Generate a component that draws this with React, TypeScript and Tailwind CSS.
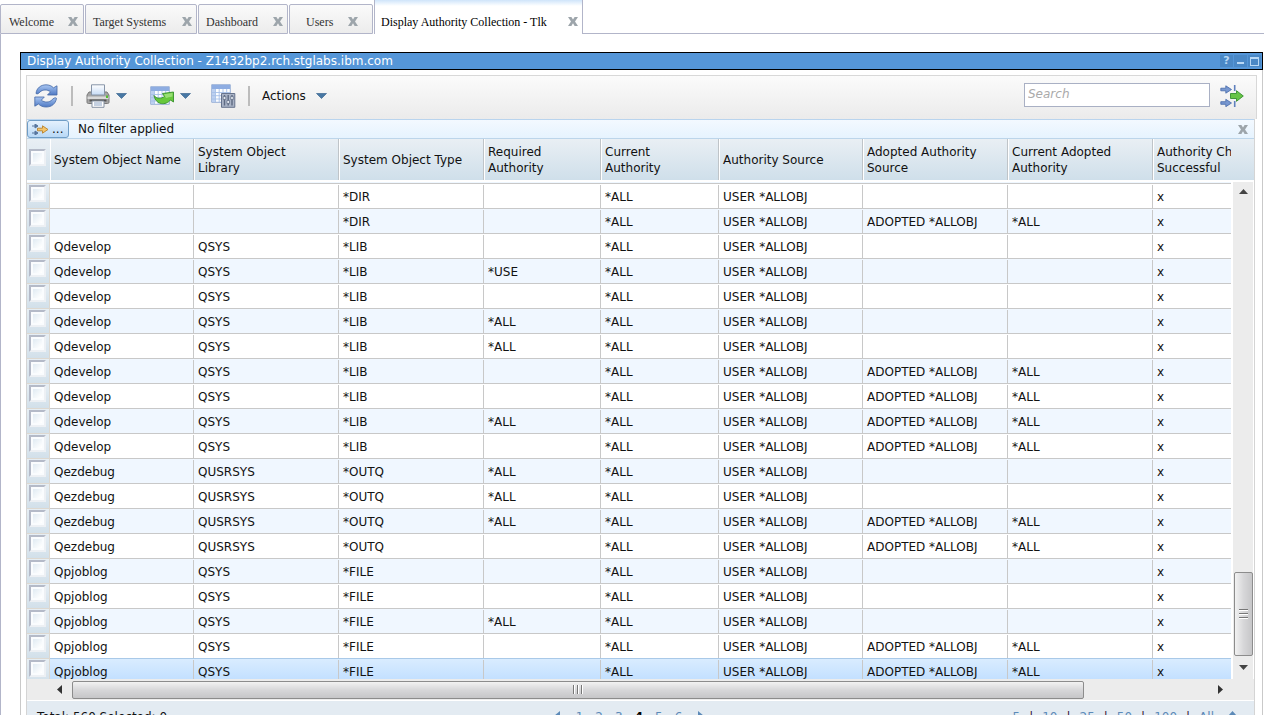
import { useState } from 'react';

const tabs = [
  { name: 'Welcome', className: 'w-[84px] pl-2 pr-[5px]' },
  { name: 'Target Systems', className: 'w-[112px] pl-[7px] pr-1' },
  { name: 'Dashboard', className: 'w-[90px] pl-[7px] pr-1' },
  { name: 'Users', className: 'w-[84px] pl-4 pr-[14px]' },
];

const columns = [
  { label: 'System Object Name', width: 'w-[144px]' },
  { label: 'System Object Library', width: 'w-[145px]' },
  { label: 'System Object Type', width: 'w-[145px]' },
  { label: 'Required Authority', width: 'w-[117px]' },
  { label: 'Current Authority', width: 'w-[118px]' },
  { label: 'Authority Source', width: 'w-[144px]' },
  { label: 'Adopted Authority Source', width: 'w-[145px]' },
  { label: 'Current Adopted Authority', width: 'w-[145px]' },
  { label: 'Authority Check Successful', width: 'w-[145px]' },
];

// name, library, type, required authority, adopted
const entries: [string, string, string, string, boolean][] = [
  ['', '', '*DIR', '', false],
  ['', '', '*DIR', '', true],
  ['Qdevelop', 'QSYS', '*LIB', '', false],
  ['Qdevelop', 'QSYS', '*LIB', '*USE', false],
  ['Qdevelop', 'QSYS', '*LIB', '', false],
  ['Qdevelop', 'QSYS', '*LIB', '*ALL', false],
  ['Qdevelop', 'QSYS', '*LIB', '*ALL', false],
  ['Qdevelop', 'QSYS', '*LIB', '', true],
  ['Qdevelop', 'QSYS', '*LIB', '', true],
  ['Qdevelop', 'QSYS', '*LIB', '*ALL', true],
  ['Qdevelop', 'QSYS', '*LIB', '', true],
  ['Qezdebug', 'QUSRSYS', '*OUTQ', '*ALL', false],
  ['Qezdebug', 'QUSRSYS', '*OUTQ', '*ALL', false],
  ['Qezdebug', 'QUSRSYS', '*OUTQ', '*ALL', true],
  ['Qezdebug', 'QUSRSYS', '*OUTQ', '', true],
  ['Qpjoblog', 'QSYS', '*FILE', '', false],
  ['Qpjoblog', 'QSYS', '*FILE', '', false],
  ['Qpjoblog', 'QSYS', '*FILE', '*ALL', false],
  ['Qpjoblog', 'QSYS', '*FILE', '', true],
  ['Qpjoblog', 'QSYS', '*FILE', '', true],
];

const rows = entries.map(([name, library, type, required, adopted]) => [
  name,
  library,
  type,
  required,
  '*ALL',
  'USER *ALLOBJ',
  adopted ? 'ADOPTED *ALLOBJ' : '',
  adopted ? '*ALL' : '',
  'x',
]);

const pageSizes = ['5', '10', '25', '50', '100', 'All'];

function CloseIcon() {
  return (
    <svg width="10" height="9" viewBox="0 0 10 9" aria-hidden="true">
      <path d="M0 0h3.4L5 2.6 6.6 0H10L7 4.4 10 9H6.6L5 6.3 3.4 9H0l3-4.6z" fill="#9da5ab" />
    </svg>
  );
}

function Caret() {
  return (
    <svg width="11" height="6" viewBox="0 0 11 6" aria-hidden="true">
      <path d="M.5.5h10l-5 5z" fill="#4878a4" stroke="#3c6790" strokeWidth=".7" />
    </svg>
  );
}

function RefreshIcon() {
  return (
    <svg width="24" height="24" viewBox="0 0 24 24" aria-hidden="true">
      <defs>
        <linearGradient id="refresh" x1="0" y1="0" x2="0" y2="1">
          <stop offset="0" stopColor="#a9c6f2" />
          <stop offset="1" stopColor="#4f7ac4" />
        </linearGradient>
      </defs>
      <path d="M2 9.500C2.500 4 7 .8 12 .8c3 0 5.500 1 7.500 3L23 1.800V11h-9.500l3-3.200C13 5.200 8.500 5.500 6 8c-1.500 1.500-2.500 2.500-4 1.500z" fill="url(#refresh)" stroke="#4468a6" strokeWidth=".8" />
      <path d="M22.500 14.300C21.500 20 17.500 23 12.200 23c-3.200 0-5.700-1-7.700-3L.8 22.200V13h9.500l-3 3.200c3.500 2.600 8 2.300 10.500-.2 1.500-1.500 3.200-3 4.700-1.700z" fill="url(#refresh)" stroke="#4468a6" strokeWidth=".8" />
    </svg>
  );
}

function PrinterIcon() {
  return (
    <svg width="24" height="24" viewBox="0 0 24 24" aria-hidden="true">
      <defs>
        <linearGradient id="paper" x1="0" y1="0" x2="0" y2="1">
          <stop offset="0" stopColor="#ffffff" />
          <stop offset="1" stopColor="#c6dbf5" />
        </linearGradient>
      </defs>
      <path d="M3 8h18l2 3v7c0 1-.5 1.500-1.500 1.500h-19C1.500 19.500 1 19 1 18v-7z" fill="#a4a4a4" stroke="#7a7a7a" />
      <path d="M5.500.8h13V11h-13z" fill="url(#paper)" stroke="#8795a8" />
      <path d="M1.500 12.500h21v2.500h-21z" fill="#d9d9d9" />
      <path d="M3.500 15.500h17v2h-17z" fill="#555" />
      <path d="M6 17h12v6.300H6z" fill="#fff" stroke="#8592a3" />
      <path d="M8 19h8M8 21h8" stroke="#8ba3c4" />
      <path d="M20 11.500h2v2.500h-2z" fill="#52c02f" />
    </svg>
  );
}

function GridLines() {
  return (
    <>
      <path d="M.7.700h18.600v17.600H.7z" fill="#fbfdff" stroke="#8ca6d2" strokeWidth=".9" />
      <path d="M1 1h18v4H1z" fill="#8eadE2" />
      <path d="M1 5h3v13H1z" fill="#bcd0f0" />
      <path d="M4.500 5V18M8.200 5V18M12 5V18M15.700 5V18M1 8.500h18M1 11.700h18M1 15h18" stroke="#a5bfe8" strokeWidth=".9" />
    </>
  );
}

function ExportIcon() {
  return (
    <svg width="24" height="20" viewBox="0 0 24 20" aria-hidden="true">
      <GridLines />
      <path d="M4 9.500c2.500 3.500 7 3.500 10.500 1L12.500 7.500l11-1.500v10l-3-2C16 19.500 6 19.500 4 9.500z" fill="#67c83c" stroke="#36912b" strokeWidth=".9" />
      <path d="M14 8.200l8.500-1.200v3.500c-3 .5-5 1-6.500 1.500z" fill="#98de74" />
    </svg>
  );
}

function ConfigureColumnsIcon() {
  return (
    <svg width="25" height="24" viewBox="0 0 25 24" aria-hidden="true">
      <GridLines />
      <path d="M10.500 9.500h13.300v13.800H10.500z" fill="#a9b3c6" stroke="#66738c" />
      <path d="M13.500 11v10.500M17.200 11v10.500M21 11v10.500" stroke="#5d6a82" strokeWidth="1.400" />
      <path d="M12.200 12.500h2.600v3h-2.600zM15.900 16.500h2.600v3h-2.600zM19.700 12.500h2.600v3h-2.600z" fill="#e2e7ef" stroke="#5d6a82" strokeWidth=".7" />
    </svg>
  );
}

function FilterIcon() {
  return (
    <svg width="24" height="22" viewBox="0 0 24 22" aria-hidden="true">
      <path d="M.8 3.200h5V.8L11.500 4.500 5.800 8.200V5.800h-5zM.8 16.700h5v-2.400l5.700 3.700-5.700 3.700v-2.400h-5z" fill="#7898d1" stroke="#4468a8" strokeWidth=".8" />
      <path d="M14.700 0v6M14.700 16v6" stroke="#5f80bd" strokeWidth="1.600" />
      <path d="M10.500 8.500h6V5.700l6.800 5.300-6.800 5.300v-2.800h-6z" fill="#67c546" stroke="#35902f" strokeWidth=".9" />
    </svg>
  );
}

function FilterBadge() {
  return (
    <svg width="17" height="11" viewBox="0 0 17 11" aria-hidden="true">
      <path d="M0 2h4M0 9h4M3 0l3 2-3 2zM3 7l3 2-3 2z" fill="#56749c" stroke="#56749c" strokeWidth="1" />
      <path d="M5.500 4.200h5V1.800l5.500 3.700-5.500 3.700V6.800h-5z" fill="#f4c56a" stroke="#b9822c" strokeWidth=".9" />
    </svg>
  );
}

function Separator() {
  return <span className="h-5 w-[2px] bg-[#bcbcbc]" />;
}

function Checkbox({ label }: { label: string }) {
  return (
    <input
      type="checkbox"
      aria-label={label}
      className="block size-[17px] appearance-none border-2 border-[#edf0f4] border-t-[#b4bac8] border-l-[#b4bac8] bg-linear-to-br from-[#d9e6f0] to-white to-80% shadow-[inset_0_0_0_2px_#fafcfe] checked:bg-[#5596d8]"
    />
  );
}

function TabStrip() {
  return (
    <nav className="flex h-[34px] shrink-0 items-end font-['Liberation_Serif',serif] text-[12px] text-[#333]">
      {tabs.map((tab) => (
        <div
          key={tab.name}
          className={`mr-px flex h-[30px] items-center justify-between rounded-t-[2px] border border-[#b2b5c9] bg-linear-to-b from-[#fafafa] to-[#ececec] pt-[5px] whitespace-nowrap ${tab.className}`}
        >
          <a href="#">{tab.name}</a>
          <button type="button" aria-label={`Close ${tab.name}`}>
            <CloseIcon />
          </button>
        </div>
      ))}
      <div className="flex h-[34px] w-[209px] items-center justify-between border-x border-[#b2b5c9] bg-linear-to-b from-[#cfe4fa] to-white to-[6px] pt-[9px] pr-1 pl-[6px] whitespace-nowrap text-black">
        <a href="#" aria-current="page">Display Authority Collection - Tlk</a>
        <button type="button" aria-label="Close Display Authority Collection">
          <CloseIcon />
        </button>
      </div>
      <div className="h-full flex-1 border-b border-[#b2b5c9]" />
    </nav>
  );
}

function TitleBar() {
  return (
    <header className="flex h-[18px] items-center border border-black bg-[#5596d8] pr-px pl-[6px] leading-4 text-white">
      <h1 className="flex-1">Display Authority Collection - Z1432bp2.rch.stglabs.ibm.com</h1>
      <div className="flex gap-px">
        <button type="button" aria-label="Help" className="flex h-3 w-[13px] items-center justify-center bg-[#4a88c6] text-[11px] leading-3 font-bold text-[#b9d8f5]">?</button>
        <button type="button" aria-label="Minimize" className="flex h-3 w-[13px] items-end justify-center bg-[#4a88c6] pb-[3px]">
          <span className="h-[2px] w-[7px] bg-[#b9d8f5]" />
        </button>
        <button type="button" aria-label="Maximize" className="flex h-3 w-[13px] items-center justify-center bg-[#4a88c6]">
          <span className="h-[9px] w-[9px] border border-t-2 border-[#b9d8f5]" />
        </button>
      </div>
    </header>
  );
}

function Toolbar() {
  return (
    <div className="flex h-11 items-center border border-b-0 border-[#d8d8d8] bg-linear-to-b from-[#fbfbfb] to-[#ebebeb] pr-3 pb-1 pl-[7px]">
      <button type="button" aria-label="Refresh" className="mr-[13px]"><RefreshIcon /></button>
      <Separator />
      <button type="button" aria-label="Print" className="ml-[13px] flex items-center gap-[6px]"><PrinterIcon /><Caret /></button>
      <button type="button" aria-label="Export" className="ml-[23px] flex items-center gap-[6px]"><ExportIcon /><Caret /></button>
      <button type="button" aria-label="Configure columns" className="mr-3 ml-5"><ConfigureColumnsIcon /></button>
      <Separator />
      <button type="button" className="ml-3 flex items-center gap-[10px]">Actions <Caret /></button>
      <input
        type="search"
        aria-label="Search"
        placeholder="Search"
        className="mr-[10px] mb-[2px] ml-auto h-6 w-[186px] border border-[#a9b0c4] bg-white px-[3px] pb-[2px] text-[12px] italic outline-none placeholder:text-[#aaa]"
      />
      <button type="button" aria-label="Advanced filter"><FilterIcon /></button>
    </div>
  );
}

function FilterBar() {
  return (
    <div className="flex h-5 items-center border-y border-t-[#b9d4ee] border-b-[#bcd5ea] bg-linear-to-b from-[#f3f9ff] to-[#e6f3fe] pr-[6px]">
      <button type="button" aria-label="Define filter" className="flex h-[18px] w-[42px] items-center gap-[3px] rounded-[3px] border border-[#6f9dc6] bg-linear-to-b from-[#e4f1fd] to-[#b9d9f6] pl-1 leading-3">
        <FilterBadge />
        <span>...</span>
      </button>
      <span className="ml-[9px] flex-1">No filter applied</span>
      <button type="button" aria-label="Clear filter"><CloseIcon /></button>
    </div>
  );
}

function AuthorityTable() {
  const [selected, setSelected] = useState(rows.length - 1);

  return (
    <table className="w-[1271px] table-fixed border-separate border-spacing-0">
      <thead>
        <tr className="h-[43px]">
          <th className="w-[23px] border-b-2 border-white bg-linear-to-b from-[#e9eff4] to-[#cfdfea] p-0 pb-1 pl-[2px]">
            <Checkbox label="Select all" />
          </th>
          {columns.map((column) => (
            <th
              key={column.label}
              className={`border-b-2 border-white bg-linear-to-b from-[#e9eff4] to-[#cfdfea] p-0 text-left font-normal ${column.width}`}
            >
              <div className="flex h-[41px] items-center border-r border-l border-r-[#bfc4c8] border-l-white pr-[11px] pl-[3px] leading-4">
                {column.label}
              </div>
            </th>
          ))}
        </tr>
      </thead>
      <tbody>
        <tr aria-hidden="true">
          <td colSpan={10} className="h-px bg-[#eff7ff] p-0" />
        </tr>
        {rows.map((row, index) => {
          const isSelected = index === selected;
          const tone = isSelected
            ? 'border-[#a9c9e8] bg-linear-to-b from-[#d9ecff] to-[#bfdeff]'
            : index % 2
              ? 'border-[#c8c8c8] bg-[#f0f7ff]'
              : 'border-[#c8c8c8] bg-white';

          return (
            <tr key={index} onClick={() => setSelected(index)}>
              <td className="border-t border-r border-[#ddd8d0] bg-linear-to-b from-[#e6eef4] to-[#d2e0ea] p-0 pt-px pl-[2px] align-top">
                <Checkbox label={`Select row ${index + 1}`} />
              </td>
              {row.map((cell, column) => (
                <td key={columns[column].label} className={`h-[25px] border-t p-0 pt-px ${tone}`}>
                  <div className="h-[23px] border-r border-[#c8c8c8] pt-[2px] pl-1 leading-5 whitespace-nowrap">{cell}</div>
                </td>
              ))}
            </tr>
          );
        })}
      </tbody>
    </table>
  );
}

function VerticalScroll() {
  return (
    <div className="flex w-[23px] shrink-0 flex-col">
      <div className="h-[41px] shrink-0 bg-linear-to-b from-[#e9eff4] to-[#cfdfea]" />
      <div className="mt-[2px] mr-px ml-[2px] flex min-h-0 flex-1 flex-col items-center bg-[#ececec]">
        <svg width="9" height="5" viewBox="0 0 9 5" className="mt-[7px] mb-[10px] shrink-0" aria-hidden="true"><path d="M0 5l4.500-5L9 5z" fill="#444" /></svg>
        <div className="flex-[370]" />
        <div className="flex w-[19px] flex-[82] flex-col items-center justify-center gap-[2px] rounded-[2px] border border-[#8c8c8c] bg-linear-to-r from-[#f2f2f2] via-[#d7d7d9] to-[#c6c6c8]">
          <span className="h-[2px] w-[9px] border-b border-white bg-[#777]" />
          <span className="h-[2px] w-[9px] border-b border-white bg-[#777]" />
          <span className="h-[2px] w-[9px] border-b border-white bg-[#777]" />
        </div>
        <svg width="9" height="5" viewBox="0 0 9 5" className="mt-[9px] mb-[9px] shrink-0" aria-hidden="true"><path d="M0 0h9L4.500 5z" fill="#444" /></svg>
      </div>
    </div>
  );
}

function HorizontalScroll() {
  return (
    <div className="flex h-[22px] shrink-0 items-center border-b border-white bg-[#ececec] pr-[31px] pl-[30px]">
      <svg width="5" height="9" viewBox="0 0 5 9" className="mr-[10px]" aria-hidden="true"><path d="M5 0v9L0 4.500z" fill="#333" /></svg>
      <div className="flex h-[18px] flex-[1012] items-center justify-center gap-[2px] rounded-[2px] border border-[#8c8c8c] bg-linear-to-b from-[#f2f2f2] via-[#d7d7d9] to-[#c6c6c8]">
        <span className="h-[9px] w-[2px] border-r border-white bg-[#777]" />
        <span className="h-[9px] w-[2px] border-r border-white bg-[#777]" />
        <span className="h-[9px] w-[2px] border-r border-white bg-[#777]" />
      </div>
      <div className="flex-[134]" />
      <svg width="5" height="9" viewBox="0 0 5 9" aria-hidden="true"><path d="M0 0v9l5-4.500z" fill="#333" /></svg>
    </div>
  );
}

function Footer() {
  return (
    <footer className="grid h-8 shrink-0 grid-cols-3 items-start bg-[#e3ebf2] pt-2 pr-[17px] pl-[10px] leading-4">
      <span>Total: 560 Selected: 0</span>
      <nav aria-label="Pages" className="flex items-start justify-center gap-3 pr-4 text-[#5c8ab8]">
        <button type="button" aria-label="Previous page" className="mt-[2px] mr-1">
          <svg width="6" height="10" viewBox="0 0 6 10" aria-hidden="true"><path d="M6 0v10L0 5z" fill="#5c8ab8" /></svg>
        </button>
        <a href="#">1</a>
        <a href="#">2</a>
        <a href="#">3</a>
        <a href="#" aria-current="page" className="font-bold text-black">4</a>
        <a href="#">5</a>
        <a href="#">6</a>
        <button type="button" aria-label="Next page" className="mt-[2px] ml-1">
          <svg width="6" height="10" viewBox="0 0 6 10" aria-hidden="true"><path d="M0 0v10l6-5z" fill="#5c8ab8" /></svg>
        </button>
      </nav>
      <div className="flex items-start justify-end text-[#5c8ab8]">
        {pageSizes.map((size, index) => (
          <span key={size} className="flex">
            {index > 0 && <span className="mx-[9px] text-[#313]">|</span>}
            <a href="#">{size}</a>
          </span>
        ))}
        <button type="button" aria-label="Collapse" className="mt-[2px] ml-[14px]">
          <svg width="9" height="9" viewBox="0 0 9 9" aria-hidden="true"><path d="M4.500 0L9 5H0z" fill="#5c8ab8" /></svg>
        </button>
      </div>
    </footer>
  );
}

export default function App() {
  return (
    <div className="flex h-screen flex-col overflow-hidden bg-white font-['DejaVu_Sans',sans-serif] text-[12px] text-[#111]">
      <TabStrip />
      <main className="min-h-0 flex-1 border-l border-[#b2b5c9] pt-[18px] pr-px pl-[19px]">
        <TitleBar />
        <section className="border-x border-[#c9c9c9] px-[5px] pt-[5px]">
          <Toolbar />
          <div className="mr-[2px] border-x border-[#d4d4d4]">
            <FilterBar />
            <div className="flex h-[calc(100vh-153px)] flex-col">
              <div className="flex min-h-0 flex-1">
                <div className="min-w-0 flex-1 overflow-hidden">
                  <AuthorityTable />
                </div>
                <VerticalScroll />
              </div>
              <HorizontalScroll />
            </div>
            <Footer />
          </div>
        </section>
      </main>
    </div>
  );
}
